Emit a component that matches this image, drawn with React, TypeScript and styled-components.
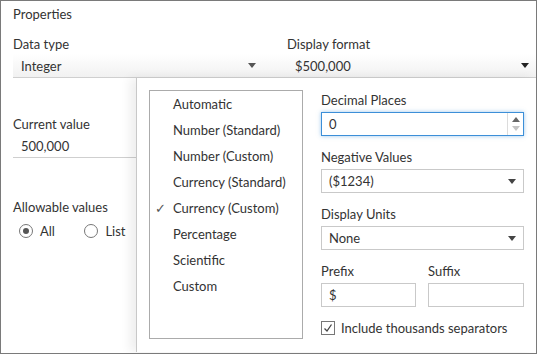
import React from "react";
import styled, { createGlobalStyle } from "styled-components";

const Global = createGlobalStyle`
  html, body { margin: 0; padding: 0; background: #fff; }
  body { font-family: Lato, "Open Sans", "Liberation Sans", sans-serif; color: #333; }
  * { box-sizing: border-box; }
`;

const Dialog = styled.div`
  position: relative;
  width: 537px;
  height: 354px;
  border: 1px solid #7a7a7a;
  background: #fff;
  overflow: hidden;
  font-size: 13px;
`;

const Title = styled.div`
  height: 27px;
  padding: 5px 0 0 12px;
  line-height: 17px;
  font-size: 13px;
  color: #333;
`;

const FieldsRow = styled.div`
  display: grid;
  grid-template-columns: 274px 1fr;
  margin-left: 12px;
  border-bottom: 1px solid #cfcfcf;
`;

const Field = styled.div`
  display: flex;
  flex-direction: column;
`;

const Label = styled.div`
  height: 18px;
  line-height: 18px;
  font-size: 13px;
  color: #333;
  white-space: nowrap;
`;

const TopLabel = styled(Label)`
  height: 26px;
  line-height: 18px;
  padding-top: 7px;
`;

const FlatSelect = styled.div<{ $arrowRight: number }>`
  height: 23px;
  display: flex;
  align-items: center;
  justify-content: space-between;
  padding: 0 ${(p) => p.$arrowRight}px 0 8px;
  background: linear-gradient(#ffffff, #f1f1f1);
  font-size: 13px;
  color: #333;
`;

const Caret = styled.span<{ $color?: string }>`
  width: 0;
  height: 0;
  border-left: 4px solid transparent;
  border-right: 4px solid transparent;
  border-top: 5px solid ${(p) => p.$color || "#444"};
  display: inline-block;
`;

const Body = styled.div`
  position: relative;
  height: 274px;
`;

const LeftCol = styled.div`
  width: 123px;
  margin-left: 12px;
  display: flex;
  flex-direction: column;
`;

const ValueField = styled.div`
  margin-top: 37px;
  border-bottom: 1px solid #cfcfcf;
`;

const ValueText = styled.div`
  height: 24px;
  padding-top: 3px;
  line-height: 20px;
  padding-left: 8px;
  font-size: 13px;
`;

const Allowable = styled.div`
  margin-top: 40px;
`;

const RadioRow = styled.div`
  display: flex;
  align-items: center;
  margin-top: 7px;
  padding-left: 6px;
  height: 16px;
`;

const RadioItem = styled.label<{ $width: number }>`
  display: flex;
  align-items: center;
  width: ${(p) => p.$width}px;
  font-size: 13px;
  color: #333;
  gap: 7px;
`;

const RadioCircle = styled.span<{ $checked?: boolean }>`
  width: 14px;
  height: 14px;
  border-radius: 50%;
  border: 1px solid #777;
  background: #fff;
  display: flex;
  align-items: center;
  justify-content: center;
  &::after {
    content: "";
    width: 6px;
    height: 6px;
    border-radius: 50%;
    background: ${(p) => (p.$checked ? "#555" : "transparent")};
  }
`;

const Popup = styled.div`
  position: absolute;
  left: 135px;
  top: 0;
  right: 0;
  bottom: 0;
  background: #fff;
  border-left: 1px solid #c8c8c8;
  box-shadow: -6px 0 10px rgba(0, 0, 0, 0.07);
  display: flex;
  padding: 12px 12px 13px 12px;
`;

const ListBox = styled.div`
  width: 154px;
  border: 1px solid #ababab;
  display: flex;
  flex-direction: column;
`;

const ListItem = styled.div`
  position: relative;
  height: 26px;
  line-height: 26px;
  padding-left: 23px;
  font-size: 13px;
  color: #333;
  white-space: nowrap;
`;

const Check = styled.span`
  position: absolute;
  left: 5px;
  top: 0;
  font-size: 13px;
  color: #555;
`;

const RightCol = styled.div`
  width: 203px;
  margin-left: 18px;
  padding-top: 1px;
  display: flex;
  flex-direction: column;
`;

const Group = styled.div<{ $gapAfter?: number }>`
  display: flex;
  flex-direction: column;
  gap: 3px;
  margin-bottom: ${(p) => (p.$gapAfter ?? 12)}px;
`;

const NumberBox = styled.div`
  height: 24px;
  display: flex;
  border: 1px solid #3c8fd8;
  box-shadow: 0 0 4px rgba(60, 143, 216, 0.5);
  background: #fff;
`;

const NumberText = styled.div`
  flex: 1;
  padding-left: 7px;
  line-height: 22px;
  font-size: 13px;
`;

const Spinner = styled.div`
  width: 16px;
  border-left: 1px solid #dcdcdc;
  display: flex;
  flex-direction: column;
  align-items: center;
  justify-content: space-around;
  padding: 2px 0;
`;

const UpCaret = styled.span<{ $color: string }>`
  width: 0;
  height: 0;
  border-left: 4px solid transparent;
  border-right: 4px solid transparent;
  border-bottom: 5px solid ${(p) => p.$color};
`;

const BoxSelect = styled.div`
  height: 24px;
  display: flex;
  align-items: center;
  justify-content: space-between;
  padding: 0 7px 0 7px;
  border: 1px solid #c9c9c9;
  background: #fff;
  font-size: 13px;
  color: #333;
`;

const Pair = styled.div`
  display: grid;
  grid-template-columns: 95px 96px;
  column-gap: 12px;
  margin-bottom: 13px;
`;

const TextBox = styled.div`
  height: 24px;
  border: 1px solid #c9c9c9;
  padding-left: 7px;
  line-height: 22px;
  font-size: 13px;
`;

const CheckRow = styled.label`
  display: flex;
  align-items: center;
  gap: 6px;
  height: 16px;
  font-size: 13px;
  color: #333;
`;

const CheckBox = styled.span`
  width: 14px;
  height: 14px;
  border: 1px solid #777;
  display: flex;
  align-items: center;
  justify-content: center;
  background: #fff;
`;

const formats = [
  "Automatic",
  "Number (Standard)",
  "Number (Custom)",
  "Currency (Standard)",
  "Currency (Custom)",
  "Percentage",
  "Scientific",
  "Custom",
];

export default function App() {
  return (
    <>
      <Global />
      <Dialog>
        <Title>Properties</Title>
        <FieldsRow>
          <Field>
            <TopLabel>Data type</TopLabel>
            <FlatSelect $arrowRight={31}>
              <span>Integer</span>
              <Caret $color="#555" />
            </FlatSelect>
          </Field>
          <Field>
            <TopLabel>Display format</TopLabel>
            <FlatSelect $arrowRight={7}>
              <span>$500,000</span>
              <Caret $color="#222" />
            </FlatSelect>
          </Field>
        </FieldsRow>
        <Body>
          <LeftCol>
            <ValueField>
              <Label>Current value</Label>
              <ValueText>500,000</ValueText>
            </ValueField>
            <Allowable>
              <Label>Allowable values</Label>
              <RadioRow>
                <RadioItem $width={66}>
                  <RadioCircle $checked />
                  All
                </RadioItem>
                <RadioItem $width={52}>
                  <RadioCircle />
                  List
                </RadioItem>
              </RadioRow>
            </Allowable>
          </LeftCol>
          <Popup>
            <ListBox>
              {formats.map((f) => (
                <ListItem key={f}>
                  {f === "Currency (Custom)" && <Check>✓</Check>}
                  {f}
                </ListItem>
              ))}
            </ListBox>
            <RightCol>
              <Group>
                <Label>Decimal Places</Label>
                <NumberBox>
                  <NumberText>0</NumberText>
                  <Spinner>
                    <UpCaret $color="#666" />
                    <Caret $color="#c4c4c4" />
                  </Spinner>
                </NumberBox>
              </Group>
              <Group>
                <Label>Negative Values</Label>
                <BoxSelect>
                  <span>($1234)</span>
                  <Caret $color="#444" />
                </BoxSelect>
              </Group>
              <Group>
                <Label>Display Units</Label>
                <BoxSelect>
                  <span>None</span>
                  <Caret $color="#444" />
                </BoxSelect>
              </Group>
              <Pair>
                <Group $gapAfter={0}>
                  <Label>Prefix</Label>
                  <TextBox>$</TextBox>
                </Group>
                <Group $gapAfter={0}>
                  <Label>Suffix</Label>
                  <TextBox />
                </Group>
              </Pair>
              <CheckRow>
                <CheckBox>
                  <svg width="10" height="10" viewBox="0 0 10 10">
                    <path d="M1.5 5.5 L4 8 L8.5 1.5" fill="none" stroke="#444" strokeWidth="1.3" />
                  </svg>
                </CheckBox>
                Include thousands separators
              </CheckRow>
            </RightCol>
          </Popup>
        </Body>
      </Dialog>
    </>
  );
}
